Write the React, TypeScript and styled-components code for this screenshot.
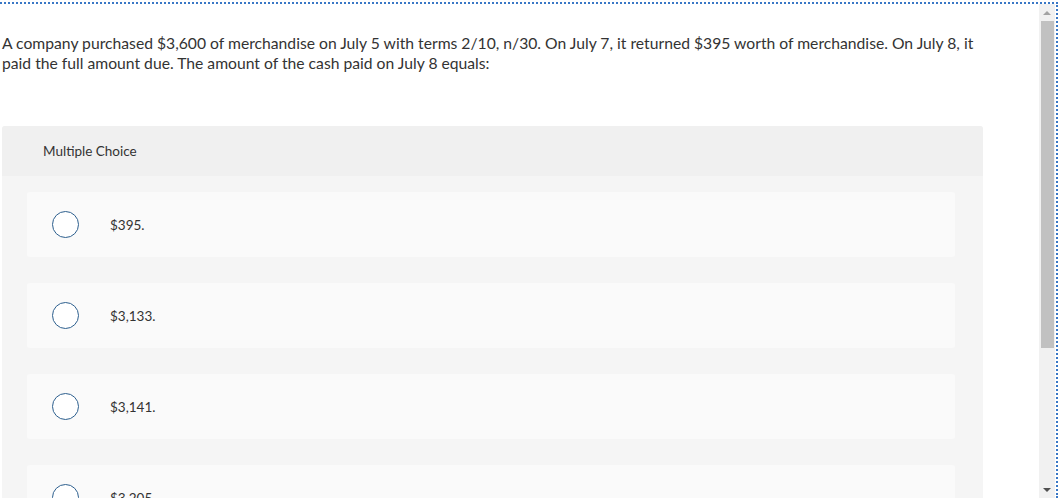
import React from "react";
import styled, { createGlobalStyle } from "styled-components";

const GlobalStyle = createGlobalStyle`
  html, body {
    margin: 0;
    padding: 0;
    background: #ffffff;
    overflow: hidden;
  }
  body {
    font-family: Lato, "Open Sans", Arial, sans-serif;
    color: #333333;
  }
`;

const Frame = styled.div`
  margin-top: 2px;
  width: 1058px;
  height: 496px;
  border-top: 2px dotted #3a78c6;
  border-right: 2px dotted #3a78c6;
  display: flex;
  overflow: hidden;
  box-sizing: border-box;
`;

const Content = styled.div`
  width: 981px;
  padding: 29px 0 0 2px;
  flex-shrink: 0;
`;

const Question = styled.p`
  margin: 0;
  font-size: 15.7px;
  line-height: 20px;
  color: #333333;
`;

const Panel = styled.section`
  margin-top: 53px;
  background: #f5f5f5;
  border-radius: 3px 3px 0 0;
`;

const PanelHeader = styled.div`
  height: 50px;
  padding-left: 41px;
  display: flex;
  align-items: center;
  background: #f0f0f0;
  border-radius: 3px 3px 0 0;
  font-size: 13.5px;
  color: #333333;
`;

const Choices = styled.div`
  padding: 16px 28px 0 25px;
  display: flex;
  flex-direction: column;
  gap: 26px;
`;

const Choice = styled.label`
  height: 65px;
  display: flex;
  align-items: center;
  background: #fafafa;
  border-radius: 3px;
  padding-left: 25px;
  font-size: 13.5px;
  color: #333333;
  flex-shrink: 0;
`;

const Radio = styled.span`
  width: 25px;
  height: 25px;
  border: 1.5px solid #2d5f8e;
  border-radius: 50%;
  background: #ffffff;
  margin-right: 31px;
  flex-shrink: 0;
`;

const Spacer = styled.div`
  flex: 1;
`;

const Scrollbar = styled.div`
  width: 16px;
  background: #f1f1f1;
  display: flex;
  flex-direction: column;
  align-items: center;
  flex-shrink: 0;
  margin-right: 1px;
`;

const Arrow = styled.div<{ $down?: boolean }>`
  height: 17px;
  width: 100%;
  display: flex;
  align-items: center;
  justify-content: center;
  &::before {
    content: "";
    border-left: 4px solid transparent;
    border-right: 4px solid transparent;
    ${(p) =>
      p.$down
        ? "border-top: 4px solid #505050;"
        : "border-bottom: 4px solid #a3a3a3;"}
  }
`;

const Thumb = styled.div`
  width: 13px;
  height: 327px;
  background: #c1c1c1;
`;

const choices = ["$395.", "$3,133.", "$3,141.", "$3,205."];

export default function App() {
  return (
    <>
      <GlobalStyle />
      <Frame>
        <Content>
          <Question>
            A company purchased $3,600 of merchandise on July 5 with terms 2/10, n/30. On July 7, it returned $395
            worth of merchandise. On July 8, it paid the full amount due. The amount of the cash paid on July 8 equals:
          </Question>
          <Panel>
            <PanelHeader>Multiple Choice</PanelHeader>
            <Choices>
              {choices.map((c) => (
                <Choice key={c}>
                  <Radio />
                  {c}
                </Choice>
              ))}
            </Choices>
          </Panel>
        </Content>
        <Spacer />
        <Scrollbar>
          <Arrow />
          <Thumb />
          <Spacer />
          <Arrow $down />
        </Scrollbar>
      </Frame>
    </>
  );
}
